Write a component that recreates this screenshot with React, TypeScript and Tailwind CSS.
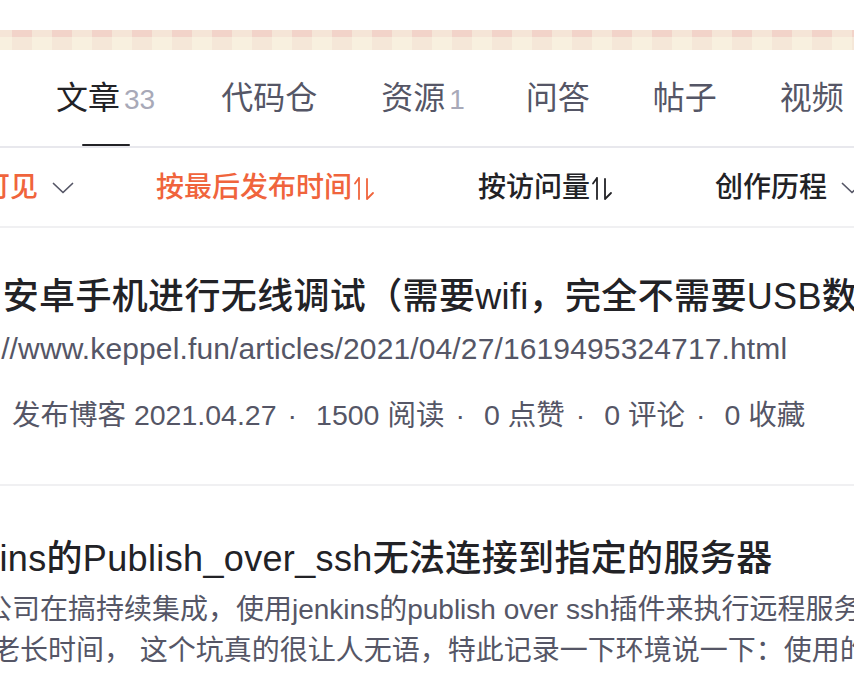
import React from "react";

const units = Array.from({ length: 23 }, (_, i) => i);

function SortIcon({ className }: { className?: string }) {
  return (
    <svg
      width="24"
      height="26"
      viewBox="0 0 24 26"
      fill="none"
      stroke="currentColor"
      strokeWidth="1.8"
      strokeLinecap="round"
      strokeLinejoin="round"
      className={className}
    >
      <path d="M7 3 V24 M7 3 L3 8.5 M15 4 V24 L21 18" />
    </svg>
  );
}

function Chevron({ className }: { className?: string }) {
  return (
    <svg
      width="22"
      height="12"
      viewBox="0 0 22 12"
      fill="none"
      stroke="#555666"
      strokeWidth="1.7"
      strokeLinecap="round"
      strokeLinejoin="round"
      className={className}
    >
      <path d="M1.5 1.5 L11 10.5 L20.5 1.5" />
    </svg>
  );
}

function Dot() {
  return <span className="ml-[11px] mr-[19px]">·</span>;
}

export default function App() {
  return (
    <div className="w-[854px] h-[692px] overflow-hidden bg-white font-['Liberation_Sans','Noto_Sans_CJK_SC',sans-serif] whitespace-nowrap">
      <div className="h-[30px]" />
      {/* decorative stripe */}
      <div className="flex h-[20px] ml-[-8px]">
        {units.map((i) => (
          <div key={i} className="flex shrink-0">
            <div className="flex flex-col w-[20px]">
              <div className="h-[7px] bg-[#f5e5d7]" />
              <div className="flex-1 bg-[#f8f0df]" />
            </div>
            <div className="flex flex-col w-[20px]">
              <div className="h-[7px] bg-[#f2d3c9]" />
              <div className="flex-1 bg-[#f5e7d8]" />
            </div>
          </div>
        ))}
      </div>

      {/* tabs */}
      <div className="flex h-[96px] pl-[56px] pt-[24px] text-[32px] leading-[48px] text-[#555666]">
        <div className="flex flex-col items-center">
          <div className="flex items-baseline text-[#222226]">
            <span>文章</span>
            <span className="ml-[4px] text-[28px] text-[#a8a9b8]">33</span>
          </div>
          <div className="mt-[20px] h-[4px] w-[48px] rounded-full bg-[#222226]" />
        </div>
        <div className="ml-[66px]">代码仓</div>
        <div className="ml-[64px] flex items-baseline">
          <span>资源</span>
          <span className="ml-[4px] text-[28px] text-[#a8a9b8]">1</span>
        </div>
        <div className="ml-[61px]">问答</div>
        <div className="ml-[63px]">帖子</div>
        <div className="ml-[63px]">视频</div>
      </div>
      <div className="h-[2px] bg-[#e8e8ed]" />

      {/* filter row */}
      <div className="flex h-[78px] items-center pt-[2px] text-[28px] leading-[40px] font-medium">
        <span className="ml-[-74px] text-[#f0643c]">全部可见</span>
        <Chevron className="ml-[14px] shrink-0" />
        <span className="ml-[82px] text-[#f0643c]">按最后发布时间</span>
        <SortIcon className="ml-[0px] shrink-0 text-[#f0643c]" />
        <span className="ml-[102px] text-[#222226]">按访问量</span>
        <SortIcon className="ml-[0px] shrink-0 text-[#222226]" />
        <span className="ml-[101px] text-[#222226]">创作历程</span>
        <Chevron className="ml-[14px] shrink-0" />
      </div>
      <div className="h-[2px] bg-[#f0f0f2]" />

      {/* article 1 */}
      <div className="flex flex-col pt-[45px] pb-[49px]">
        <div className="ml-[-70px] text-[36px] leading-[48px] font-medium tracking-[0.35px] text-[#222226]">
          使用安卓手机进行无线调试（需要wifi，完全不需要USB数据线）
        </div>
        <div className="ml-[-73px] mt-[8px] text-[30px] leading-[40px] tracking-[0.13px] text-[#555666]">
          https://www.keppel.fun/articles/2021/04/27/1619495324717.html
        </div>
        <div className="ml-[12px] mt-[26px] flex text-[28.5px] leading-[40px] text-[#555666]">
          <span>发布博客 2021.04.27</span>
          <Dot />
          <span>1500 阅读</span>
          <Dot />
          <span>0 点赞</span>
          <Dot />
          <span>0 评论</span>
          <Dot />
          <span>0 收藏</span>
        </div>
      </div>
      <div className="h-[2px] bg-[#f0f0f2]" />

      {/* article 2 */}
      <div className="flex flex-col pt-[49px]">
        <div className="ml-[-78px] text-[36px] leading-[48px] font-medium tracking-[0.35px] text-[#222226]">
          Jenkins的Publish_over_ssh无法连接到指定的服务器
        </div>
        <div className="ml-[-72px] mt-[6px] text-[28px] leading-[41px] text-[#555666]">
          最近公司在搞持续集成，使用jenkins的publish over ssh插件来执行远程服务器上的脚本
        </div>
        <div className="ml-[-64px] text-[28px] leading-[41px] text-[#555666]">
          花了老长时间， 这个坑真的很让人无语，特此记录一下环境说一下：使用的是阿里云服务器
        </div>
      </div>
    </div>
  );
}
